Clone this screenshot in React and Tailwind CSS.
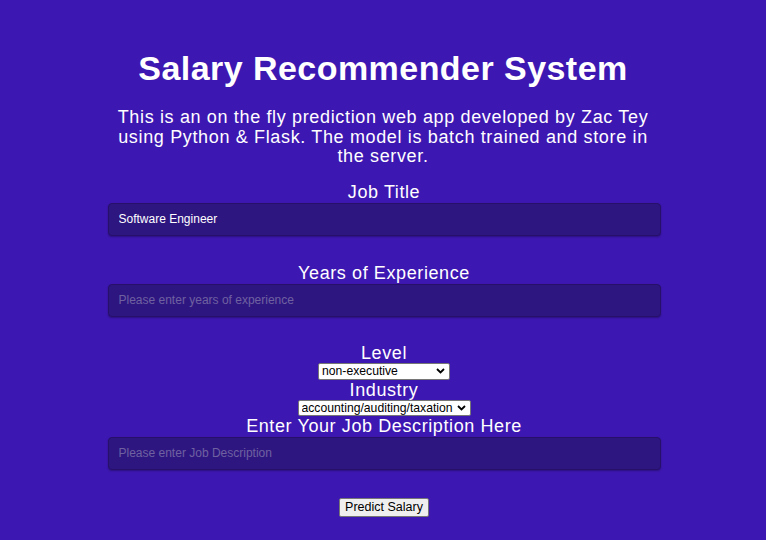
function Chevron() {
  return (
    <svg
      className="pointer-events-none absolute right-[5px] top-1/2 -translate-y-1/2"
      width="9"
      height="6"
      viewBox="0 0 9 6"
      fill="none"
    >
      <path d="M1 1l3.5 3.5L8 1" stroke="#000" strokeWidth="1.8" />
    </svg>
  );
}

function Field({ value, placeholder }) {
  return (
    <input
      type="text"
      defaultValue={value}
      placeholder={placeholder}
      className="mt-[1px] block w-full h-[33px] px-[10px] text-[12px] text-white bg-[#2e1681] border border-[#26106a] rounded-[4px] shadow-[0_1px_2px_rgba(0,0,0,0.3)] placeholder:text-[#6f61a0] outline-none"
    />
  );
}

export default function App() {
  return (
    <div
      className="min-h-[540px] w-full bg-[#3d17b2] text-white text-center"
      style={{ fontFamily: '"Liberation Sans", Arial, sans-serif' }}
    >
      <div className="pt-[48px]">
        <h1 className="text-[34px] leading-[40px] font-bold tracking-[0.45px]">Salary Recommender System</h1>
        <p className="mt-[20px] mx-auto w-[560px] text-[18px] leading-[19.5px] tracking-[0.65px]">
          This is an on the fly prediction web app developed by Zac Tey using Python &amp; Flask. The model is batch
          trained and store in the server.
        </p>

        <form className="mx-auto w-[553px] mt-[15px] translate-x-[1px]">
          <label className="block text-[18px] leading-[20px] tracking-[0.6px]">Job Title</label>
          <Field value="Software Engineer" />

          <label className="block mt-[27px] text-[18px] leading-[20px] tracking-[0.6px]">Years of Experience</label>
          <Field placeholder="Please enter years of experience" />

          <label className="block mt-[26px] text-[18px] leading-[20px] tracking-[0.6px]">Level</label>
          <div className="relative mx-auto w-[132px]">
            <select className="appearance-none block w-full h-[17px] text-[12.2px] leading-[15px] text-black bg-white border border-[#767676] rounded-[2px] pl-[3px] text-left">
              <option>non-executive</option>
              <option>executive</option>
              <option>manager</option>
            </select>
            <Chevron />
          </div>

          <label className="block mt-[0px] text-[18px] leading-[20px] tracking-[0.6px]">Industry</label>
          <div className="relative mx-auto w-[173px]">
            <select className="appearance-none block w-full h-[16px] text-[12.2px] leading-[14px] text-black bg-white border border-[#767676] rounded-[2px] pl-[3px] text-left">
              <option>accounting/auditing/taxation</option>
              <option>banking/finance</option>
            </select>
            <Chevron />
          </div>

          <label className="block text-[18px] leading-[20px] tracking-[0.6px]">Enter Your Job Description Here</label>
          <Field placeholder="Please enter Job Description" />

          <button
            type="button"
            className="mt-[28px] w-[90px] h-[19px] text-[12.5px] leading-[15px] text-black bg-[#efefef] border border-[#767676] rounded-[2px]"
          >
            Predict Salary
          </button>
        </form>
      </div>
    </div>
  );
}
